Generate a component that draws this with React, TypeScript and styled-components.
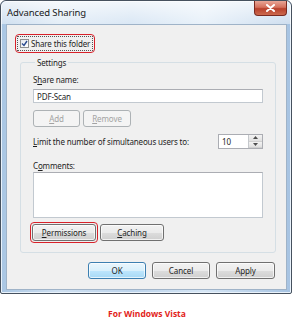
import React from "react";
import styled, { createGlobalStyle } from "styled-components";

const Global = createGlobalStyle`
  html, body { margin: 0; padding: 0; background: #ffffff; }
  body { font-family: "Noto Sans", "Open Sans", sans-serif; font-size: 8px; color: #1e1e1e; }
  #root { width: 294px; height: 319px; }
`;

const Page = styled.div`
  display: flex;
  flex-direction: column;
  width: 294px;
`;

const Window = styled.div`
  width: 290px;
  height: 292px;
  border: 1px solid #46515e;
  border-radius: 6px 6px 2px 2px;
  background: linear-gradient(90deg, #a9c6e3 0%, #cfe0f1 20%, #bcd4ec 45%, #d6e6f5 70%, #a6c3e2 100%);
  display: flex;
  flex-direction: column;
  box-shadow: inset 0 0 0 1px #e9f2fb;
`;

const TitleBar = styled.div`
  height: 23px;
  display: flex;
  align-items: flex-start;
  justify-content: space-between;
  padding-left: 6px;
  padding-right: 4px;
  background: linear-gradient(180deg, rgba(255,255,255,0.8) 0%, rgba(255,255,255,0.45) 100%);
  border-radius: 6px 6px 0 0;
`;

const Title = styled.span`
  font-family: "Noto Sans", sans-serif;
  font-size: 9.5px;
  line-height: 23px;
  color: #1a1a1a;
  letter-spacing: -0.1px;
`;

const CloseButton = styled.div`
  width: 33px;
  height: 15px;
  display: flex;
  align-items: center;
  justify-content: center;
  border: 1px solid #7a2a20;
  border-top: none;
  border-radius: 0 0 4px 4px;
  background: linear-gradient(180deg, #e8a596 0%, #d4705c 45%, #b8402c 55%, #cc6a4e 100%);
  box-sizing: border-box;
`;

const Client = styled.div`
  flex: 1;
  margin: 0 4px 3px 5px;
  border: 1px solid #9fb3c8;
  background: #f0f0f0;
  display: flex;
  flex-direction: column;
  align-items: stretch;
  padding: 9px 10px 0 8px;
  white-space: nowrap;
  letter-spacing: -0.15px;
`;

const FocusRing = styled.div<{ $ml?: number }>`
  align-self: flex-start;
  margin-left: ${(p) => p.$ml ?? 0}px;
  border: 1.5px solid #d8212a;
  border-radius: 4px;
  box-sizing: border-box;
  padding: 1px;
  display: flex;
  align-items: center;
`;

const CheckRow = styled.label`
  display: flex;
  align-items: center;
  gap: 2px;
  padding: 1px 2px 1px 2px;
  border: 1px dotted #555;
  height: 11px;
`;

const CheckBox = styled.span`
  width: 9px;
  height: 9px;
  border: 1px solid #8e8f8f;
  background: linear-gradient(135deg, #e6e8ee, #ffffff);
  display: flex;
  align-items: center;
  justify-content: center;
  box-sizing: border-box;
`;

const Group = styled.fieldset`
  margin: 4px 0 0 5px;
  padding: 2px 12px 9px 12px;
  border: 1px solid #d5dfe5;
  border-radius: 3px;
  display: flex;
  flex-direction: column;
  min-width: 0;
`;

const Legend = styled.legend`
  padding: 0 2px;
  margin-left: 2px;
  line-height: 11px;
`;

const Label = styled.div<{ $mt?: number }>`
  margin-top: ${(p) => p.$mt ?? 0}px;
  line-height: 12px;
`;

const TextBox = styled.div<{ $h: number; $mt?: number }>`
  height: ${(p) => p.$h}px;
  margin-top: ${(p) => p.$mt ?? 0}px;
  border: 1px solid #c2c9d0;
  border-top-color: #abadb3;
  background: #ffffff;
  box-sizing: border-box;
  padding: 1px 3px;
  line-height: 11px;
`;

const Row = styled.div<{ $mt?: number; $gap?: number }>`
  display: flex;
  align-items: center;
  gap: ${(p) => p.$gap ?? 3}px;
  margin-top: ${(p) => p.$mt ?? 0}px;
`;

const Button = styled.button<{ $w: number; $disabled?: boolean; $default?: boolean }>`
  width: ${(p) => p.$w}px;
  height: 17px;
  padding: 0;
  font-family: "Noto Sans", sans-serif;
  font-size: 8px;
  letter-spacing: -0.1px;
  color: ${(p) => (p.$disabled ? "#a3a3a3" : "#1e1e1e")};
  border: 1px solid ${(p) => (p.$disabled ? "#adb2b5" : p.$default ? "#3c7fb1" : "#707070")};
  border-radius: 3px;
  background: ${(p) =>
    p.$disabled
      ? "#f4f4f4"
      : p.$default
      ? "linear-gradient(180deg, #eaf6fd 0%, #d9f0fc 50%, #bee6fd 51%, #a7d9f5 100%)"
      : "linear-gradient(180deg, #f2f2f2 0%, #ebebeb 50%, #dddddd 51%, #cfcfcf 100%)"};
  box-shadow: inset 0 0 0 1px ${(p) => (p.$disabled ? "#f4f4f4" : "rgba(255,255,255,0.7)")};
  box-sizing: border-box;
  line-height: 15px;
`;

const Spin = styled.div`
  width: 45px;
  height: 15px;
  margin-left: auto;
  border: 1px solid #abadb3;
  background: #fff;
  box-sizing: border-box;
  display: flex;
  align-items: stretch;
`;

const SpinText = styled.span`
  flex: 1;
  padding-left: 3px;
  line-height: 13px;
`;

const SpinButtons = styled.div`
  width: 13px;
  display: flex;
  flex-direction: column;
  border-left: 1px solid #c5c8cc;
`;

const SpinHalf = styled.div`
  flex: 1;
  display: flex;
  align-items: center;
  justify-content: center;
  background: linear-gradient(180deg, #f3f3f3, #e0e0e0);
  border-bottom: 1px solid #d0d0d0;
`;

const Footer = styled.div`
  display: flex;
  justify-content: flex-end;
  gap: 6px;
  margin-top: 9px;
  padding-right: 1px;
`;

const Caption = styled.div`
  margin-top: 15px;
  text-align: center;
  color: #e2231a;
  font-family: "Open Sans", "Noto Sans", sans-serif;
  font-weight: 700;
  font-size: 8.5px;
  line-height: 10px;
`;

const U = styled.span`
  text-decoration: underline;
`;

const Arrow = ({ up }: { up?: boolean }) => (
  <svg width="5" height="3" viewBox="0 0 5 3">
    <path d={up ? "M0 3 L2.5 0 L5 3 Z" : "M0 0 L2.5 3 L5 0 Z"} fill="#4d4d4d" />
  </svg>
);

export default function App() {
  return (
    <Page>
      <Global />
      <Window>
        <TitleBar>
          <Title>Advanced Sharing</Title>
          <CloseButton>
            <svg width="9" height="8" viewBox="0 0 9 8">
              <path d="M1 1 L8 7 M8 1 L1 7" stroke="#ffffff" strokeWidth="2" strokeLinecap="round" />
            </svg>
          </CloseButton>
        </TitleBar>
        <Client>
          <FocusRing>
            <CheckRow>
              <CheckBox>
                <svg width="7" height="7" viewBox="0 0 7 7">
                  <path d="M1 3.5 L3 5.5 L6 1" stroke="#2a4a8f" strokeWidth="1.4" fill="none" />
                </svg>
              </CheckBox>
              Share this folder
            </CheckRow>
          </FocusRing>
          <Group>
            <Legend>Settings</Legend>
            <Label $mt={4}>
              S<U>h</U>are name:
            </Label>
            <TextBox $h={14} $mt={3}>PDF-Scan</TextBox>
            <Row $mt={7}>
              <Button $w={47} $disabled>
                <U>A</U>dd
              </Button>
              <Button $w={48} $disabled>
                <U>R</U>emove
              </Button>
            </Row>
            <Row $mt={7}>
              <Label>
                <U>L</U>imit the number of simultaneous users to:
              </Label>
              <Spin>
                <SpinText>10</SpinText>
                <SpinButtons>
                  <SpinHalf>
                    <Arrow up />
                  </SpinHalf>
                  <SpinHalf>
                    <Arrow />
                  </SpinHalf>
                </SpinButtons>
              </Spin>
            </Row>
            <Label $mt={11}>
              C<U>o</U>mments:
            </Label>
            <TextBox $h={46} $mt={0} />
            <Row $mt={4} $gap={2}>
              <FocusRing $ml={-3}>
                <Button $w={64}>
                  <U>P</U>ermissions
                </Button>
              </FocusRing>
              <Button $w={64}>
                <U>C</U>aching
              </Button>
            </Row>
          </Group>
          <Footer>
            <Button $w={58} $default>OK</Button>
            <Button $w={58}>Cancel</Button>
            <Button $w={59}>Apply</Button>
          </Footer>
        </Client>
      </Window>
      <Caption>For Windows Vista</Caption>
    </Page>
  );
}
